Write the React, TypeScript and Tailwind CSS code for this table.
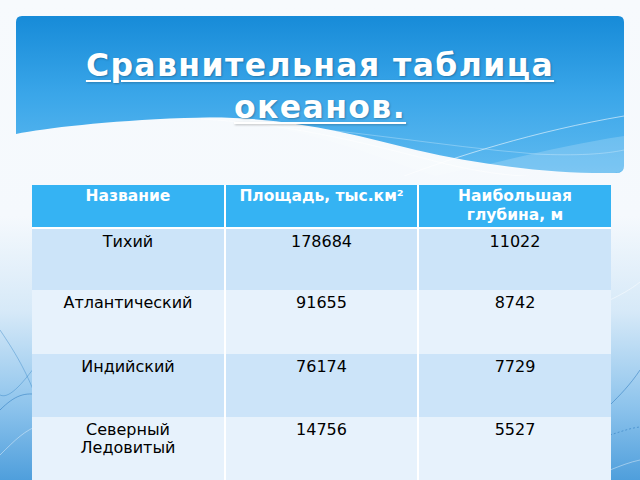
import React from "react";

const rows = [
  { name: ["Тихий"], area: "178684", depth: "11022", h: "h-[61px]", bg: "bg-[#cce4f9]" },
  { name: ["Атлантический"], area: "91655", depth: "8742", h: "h-[64px]", bg: "bg-[#e7f2fc]" },
  { name: ["Индийский"], area: "76174", depth: "7729", h: "h-[63px]", bg: "bg-[#cce4f9]" },
  { name: ["Северный", "Ледовитый"], area: "14756", depth: "5527", h: "h-[66px]", bg: "bg-[#e7f2fc]" },
];

export default function App() {
  return (
    <div
      className="relative w-[640px] h-[480px] overflow-hidden bg-[linear-gradient(180deg,#f7fafd_0%,#f5f9fd_45%,#d6e9f8_65%,#8cc3ec_85%,#4f9fdc_100%)]"
      style={{ fontFamily: '"DejaVu Sans", Verdana, sans-serif' }}
    >
      {/* decorative background lines */}
      <svg className="absolute inset-0" width="640" height="480" viewBox="0 0 640 480" fill="none">
        <path d="M0 330 C 20 360, 40 390, 60 480" stroke="#2e7fc4" strokeOpacity="0.5" strokeWidth="0.8" />
        <path d="M0 395 C 10 400, 25 380, 40 360" stroke="#2e7fc4" strokeOpacity="0.5" strokeWidth="0.8" />
        <path d="M0 410 C 15 395, 25 392, 40 395" stroke="#1f6fb8" strokeOpacity="0.6" strokeWidth="0.8" />
        <path d="M0 455 C 15 440, 25 430, 40 425" stroke="#ffffff" strokeOpacity="0.5" strokeWidth="0.8" />
        <path d="M610 300 C 620 295, 630 290, 640 282" stroke="#ffffff" strokeOpacity="0.6" strokeWidth="0.8" />
        <path d="M610 405 C 620 395, 630 385, 640 370" stroke="#1f6fb8" strokeOpacity="0.6" strokeWidth="0.8" />
        <path d="M610 435 C 620 432, 630 428, 640 427" stroke="#1f6fb8" strokeOpacity="0.6" strokeWidth="0.8" strokeDasharray="2 2" />
        <path d="M610 470 C 620 466, 630 462, 640 460" stroke="#ffffff" strokeOpacity="0.5" strokeWidth="0.8" />
      </svg>

      <div className="relative pt-[16px] px-[16px]">
        {/* banner */}
        <div className="relative w-[608px] h-[160px]">
          <svg className="absolute inset-0" width="608" height="160" viewBox="0 0 608 160" fill="none">
            <defs>
              <linearGradient id="bn" x1="0" y1="0" x2="0" y2="1">
                <stop offset="0" stopColor="#178bd8" />
                <stop offset="0.5" stopColor="#3aa6e9" />
                <stop offset="1" stopColor="#5fbaf0" />
              </linearGradient>
            </defs>
            <path
              d="M0 6 Q0 0 6 0 L602 0 Q608 0 608 6 L608 150 Q608 158 598 157 C 540 158 470 150 400 134 C 330 116 260 98 168 102 C 90 105 30 112 0 118 Z"
              fill="url(#bn)"
            />
            <path
              d="M180 101 C 260 100 330 118 400 136 C 470 152 540 160 598 157 Q608 156 608 150 L608 120 C 540 130 470 150 420 160 C 380 150 300 110 180 101 Z"
              fill="#ffffff"
              fillOpacity="0.18"
            />
            <path d="M185 103 C 280 108 360 130 430 148 C 480 160 520 162 545 160" stroke="#ffffff" strokeOpacity="0.7" strokeWidth="0.8" />
            <path d="M375 165 C 440 140 520 115 608 100" stroke="#ffffff" strokeOpacity="0.7" strokeWidth="0.8" />
            <path d="M230 108 C 330 112 420 130 520 138 C 560 140 590 138 608 134" stroke="#ffffff" strokeOpacity="0.35" strokeWidth="0.8" />
          </svg>
          <div className="relative pt-[28px] text-center text-white font-bold text-[31.5px] leading-[42px] tracking-[1.4px] underline decoration-[2px] underline-offset-[4px] [text-shadow:1px_1px_2px_rgba(0,0,0,0.25)]">
            <div>Сравнительная таблица</div>
            <div>океанов.</div>
          </div>
        </div>

        {/* table */}
        <div className="ml-[16px] mt-[9px] w-[579px] bg-white">
          <div className="grid grid-cols-[192px_191px_192px] gap-x-[2px] mb-[2px]">
            <div className="h-[42px] bg-[#35b3f3] text-white font-bold text-[15.5px] leading-[19px] text-center pt-[2px]">Название</div>
            <div className="h-[42px] bg-[#35b3f3] text-white font-bold text-[15.5px] leading-[19px] text-center pt-[2px]">
              Площадь, тыс.км²
            </div>
            <div className="h-[42px] bg-[#35b3f3] text-white font-bold text-[15.5px] leading-[19px] text-center pt-[2px]">
              Наибольшая
              <br />
              глубина, м
            </div>
          </div>
          {rows.map((r, i) => (
            <div key={i} className="grid grid-cols-[192px_191px_192px] gap-x-[2px]">
              <div className={`${r.h} ${r.bg} text-black text-[16px] leading-[18px] text-center pt-[4px]`}>
                {r.name.map((n, j) => (
                  <div key={j}>{n}</div>
                ))}
              </div>
              <div className={`${r.h} ${r.bg} text-black text-[16px] leading-[18px] text-center pt-[4px]`}>{r.area}</div>
              <div className={`${r.h} ${r.bg} text-black text-[16px] leading-[18px] text-center pt-[4px]`}>{r.depth}</div>
            </div>
          ))}
        </div>
      </div>
    </div>
  );
}
